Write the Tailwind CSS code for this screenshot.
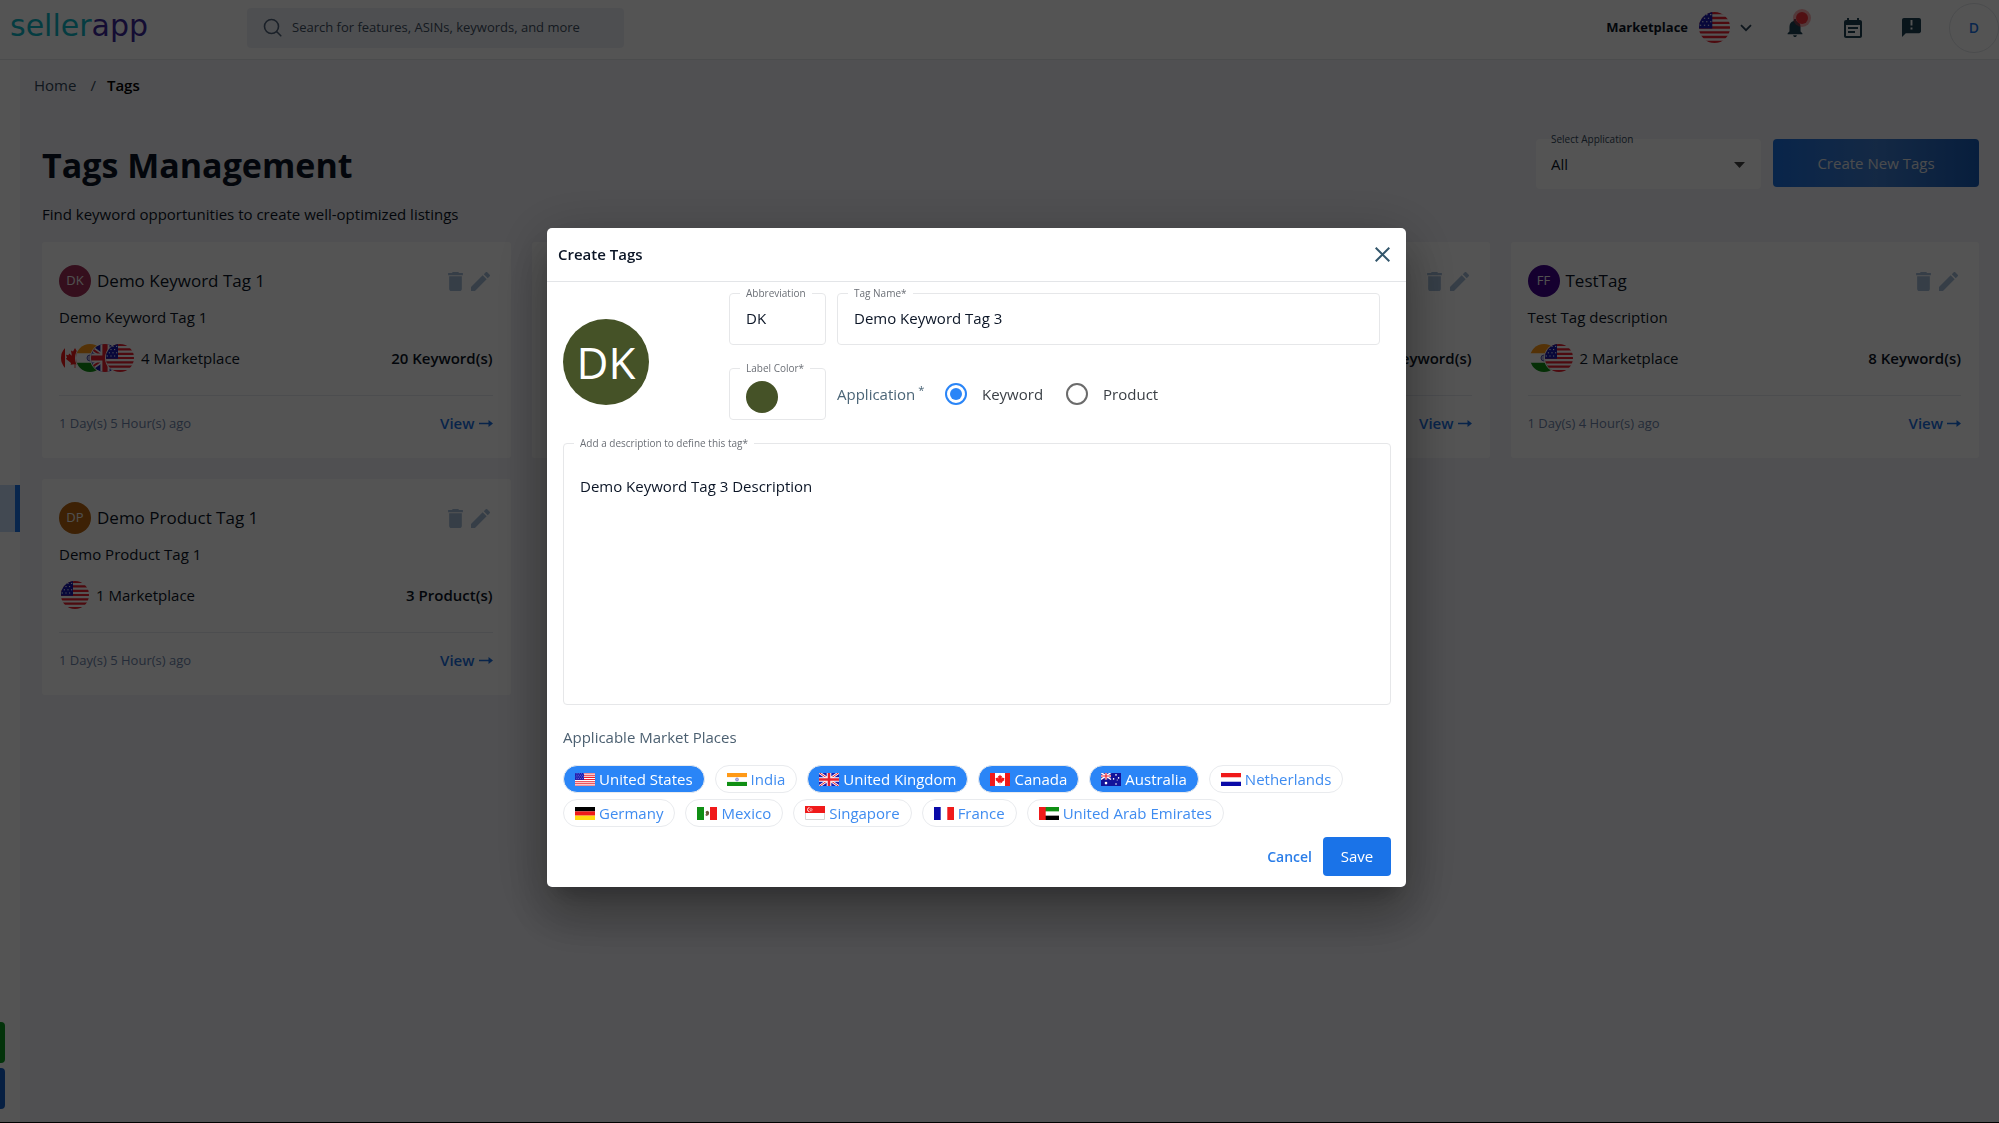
<!DOCTYPE html>
<html lang="en">
<head>
<meta charset="utf-8">
<title>SellerApp - Tags Management</title>
<script src="https://cdn.jsdelivr.net/npm/@tailwindcss/browser@4"></script>
</head>
<body class="min-h-screen bg-[#f2f2f7] font-['Open_Sans',sans-serif] text-[15px] text-[#0b1526]">

<svg class="hidden" aria-hidden="true">
  <symbol id="us" viewBox="0 0 20 14" preserveAspectRatio="xMidYMid slice">
    <path fill="#fff" d="M0 0h20v14H0z"/>
    <path stroke="#e8202e" stroke-width="1.1" d="M0 .5h20M0 2.7h20M0 4.9h20M0 7h20M0 9.2h20M0 11.3h20M0 13.5h20"/>
    <path fill="#1b1bb0" d="M0 0h9v7.4H0z"/>
    <path stroke="#fff" stroke-width=".5" stroke-dasharray=".6 1.2" d="M.8 1.2h8M1.6 2.8h7M.8 4.4h8M1.6 6h7"/>
  </symbol>
  <symbol id="in" viewBox="0 0 20 14" preserveAspectRatio="xMidYMid slice">
    <path fill="#fff" d="M0 0h20v14H0z"/><path fill="#ff9916" d="M0 0h20v4.6H0z"/><path fill="#108f14" d="M0 9.4h20V14H0z"/>
    <circle cx="10" cy="7" r="1.5" fill="#b9b9e0" stroke="#5a5ab8" stroke-width=".5"/>
  </symbol>
  <symbol id="gb" viewBox="0 0 20 14" preserveAspectRatio="xMidYMid slice">
    <path fill="#1b1bb0" d="M0 0h20v14H0z"/>
    <path stroke="#fff" stroke-width="2.6" d="M0 0l20 14M20 0L0 14"/><path stroke="#e8202e" stroke-width="1" d="M0 0l20 14M20 0L0 14"/>
    <path stroke="#fff" stroke-width="4.6" d="M10 0v14M0 7h20"/><path stroke="#e8202e" stroke-width="2.6" d="M10 0v14M0 7h20"/>
  </symbol>
  <symbol id="ca" viewBox="0 0 20 14" preserveAspectRatio="xMidYMid slice">
    <path fill="#fff" d="M0 0h20v14H0z"/><path fill="#f01a1a" d="M0 0h5v14H0zM15 0h5v14h-5z"/>
    <path fill="#f01a1a" d="M10 2l1 1.8 1-.5-.4 2.6 1.300-1.200.4.9 1.200-.2-.5 1.500.6.5-2.600 2.100.2.900-2-.3V12h-.4v-1.900l-2 .3.2-.9-2.600-2.100.6-.5-.5-1.500 1.200.2.4-.9 1.300 1.200L8 3.300l1 .5z"/>
  </symbol>
  <symbol id="au" viewBox="0 0 20 14" preserveAspectRatio="xMidYMid slice">
    <path fill="#12129a" d="M0 0h20v14H0z"/>
    <path stroke="#fff" stroke-width="1.500" d="M0 0l10 7M10 0L0 7"/><path stroke="#fff" stroke-width="2.400" d="M5 0v7M0 3.500h10"/><path stroke="#e8202e" stroke-width="1.200" d="M5 0v7M0 3.500h10"/>
    <g fill="#fff"><circle cx="5" cy="10.600" r="1.300"/><circle cx="15" cy="2.400" r=".8"/><circle cx="15" cy="11.500" r=".8"/><circle cx="12.600" cy="6.400" r=".8"/><circle cx="17.600" cy="5.400" r=".8"/><circle cx="16.200" cy="7.600" r=".5"/></g>
  </symbol>
  <symbol id="nl" viewBox="0 0 20 14" preserveAspectRatio="none"><path fill="#fff" d="M0 0h20v14H0z"/><path fill="#f01a1a" d="M0 0h20v4.600H0z"/><path fill="#0a0aa8" d="M0 9.400h20V14H0z"/></symbol>
  <symbol id="de" viewBox="0 0 20 14" preserveAspectRatio="none"><path d="M0 0h20v4.700H0z"/><path fill="#f01a1a" d="M0 4.700h20v4.600H0z"/><path fill="#ffd90f" d="M0 9.300h20V14H0z"/></symbol>
  <symbol id="mx" viewBox="0 0 20 14" preserveAspectRatio="none"><path fill="#fff" d="M0 0h20v14H0z"/><path fill="#108f14" d="M0 0h7v14H0z"/><path fill="#f01a1a" d="M13 0h7v14h-7z"/><path fill="#6b5a3a" d="M9 4.500l2-.5 1.200 2-.6 2.500L9.500 9.800 8 8.400l1.400-.6L8.600 6z"/></symbol>
  <symbol id="sg" viewBox="0 0 20 14" preserveAspectRatio="none"><path fill="#fff" stroke="#d5d5d5" d="M.5.5h19v13H.5z"/><path fill="#f01a1a" d="M0 0h20v7H0z"/><path fill="none" stroke="#fff" stroke-width=".9" d="M4.500 1.600a2 2 0 1 0 0 4"/><g fill="#fff"><circle cx="6" cy="2.200" r=".5"/><circle cx="5" cy="3.300" r=".5"/><circle cx="7" cy="3.300" r=".5"/><circle cx="5.500" cy="4.700" r=".5"/><circle cx="6.800" cy="4.700" r=".5"/></g></symbol>
  <symbol id="fr" viewBox="0 0 20 14" preserveAspectRatio="none"><path fill="#fff" d="M0 0h20v14H0z"/><path fill="#0a0aa8" d="M0 0h6.700v14H0z"/><path fill="#f01a1a" d="M13.300 0H20v14h-6.700z"/></symbol>
  <symbol id="ae" viewBox="0 0 20 14" preserveAspectRatio="none"><path fill="#fff" d="M0 0h20v14H0z"/><path fill="#108f14" d="M0 0h20v4.700H0z"/><path d="M0 9.300h20V14H0z"/><path fill="#f01a1a" d="M0 0h6.700v14H0z"/></symbol>
  <symbol id="trash" viewBox="5 3 14 18"><path fill="currentColor" d="M6 19c0 1.100.9 2 2 2h8c1.100 0 2-.9 2-2V7H6v12zM19 4h-3.500l-1-1h-5l-1 1H5v2h14V4z"/></symbol>
  <symbol id="pencil" viewBox="3 3 18 18"><path fill="currentColor" d="M3 17.250V21h3.750L17.810 9.940l-3.750-3.750L3 17.250zM20.710 7.040a1 1 0 0 0 0-1.410l-2.340-2.340a1 1 0 0 0-1.410 0l-1.830 1.830 3.750 3.750 1.830-1.830z"/></symbol>
</svg>

<header class="flex h-[60px] items-center border-b border-[#e4e6ea] bg-white pb-1 pl-[10px]">
  <a href="#" class="w-[237px] pb-1 font-['DejaVu_Sans',sans-serif] text-[30px] leading-[40px] text-[#0fb5c4]">seller<span class="text-[#3d2a9c]">app</span></a>
  <label class="flex h-10 w-[377px] items-center gap-[10px] rounded bg-[#edf0f5] pl-4">
    <svg class="size-[19px] text-[#50627a]" viewBox="0 0 19 19" fill="none" stroke="currentColor" stroke-width="1.600" stroke-linecap="round"><circle cx="8.500" cy="8.500" r="7"/><path d="M13.800 13.800l4 4"/></svg>
    <input type="search" aria-label="Search" placeholder="Search for features, ASINs, keywords, and more" class="min-w-0 flex-1 text-[13px] outline-none placeholder:text-[#3f4f63]">
  </label>
  <div class="ml-auto flex items-center">
    <button class="flex items-center text-[13px] font-bold">Marketplace
      <svg class="ml-[11px] size-[31px] rounded-full"><use href="#us"/></svg>
      <svg class="ml-[10px] h-[8px] w-[12px] text-[#2b4558]" viewBox="0 0 12 8" fill="none" stroke="currentColor" stroke-width="1.800"><path d="M1 1.200l5 5 5-5"/></svg>
    </button>
    <button aria-label="Notifications" class="relative ml-[35px]">
      <svg class="h-[18px] w-[16px] text-[#1e4254]" viewBox="4 2.500 16 19.500"><path fill="currentColor" d="M12 22c1.100 0 2-.9 2-2h-4c0 1.100.9 2 2 2zm6-6v-5c0-3.070-1.630-5.640-4.500-6.320V4a1.500 1.500 0 0 0-3 0v.680C7.640 5.360 6 7.920 6 11v5l-2 2v1h16v-1l-2-2z"/></svg>
      <span class="absolute -top-[7px] left-[9px] size-[12px] rounded-full bg-[#f5323c] ring-3 ring-[#f5323c]/40"></span>
    </button>
    <button aria-label="Calendar" class="ml-[41px]">
      <svg class="h-[20px] w-[18px] text-[#1e4254]" viewBox="3 1 18 20"><path fill="currentColor" d="M17 10H7v2h10v-2zm2-7h-1V1h-2v2H8V1H6v2H5a2 2 0 0 0-2 2v14c0 1.100.890 2 2 2h14c1.100 0 2-.9 2-2V5c0-1.100-.9-2-2-2zm0 16H5V8h14v11zm-5-5H7v2h7v-2z"/></svg>
    </button>
    <button aria-label="Feedback" class="ml-[40px]">
      <svg class="size-[19px] text-[#1e4254]" viewBox="2 2 20 20"><path fill="currentColor" d="M20 2H4c-1.100 0-2 .9-2 2v18l4-4h14c1.100 0 2-.9 2-2V4c0-1.100-.9-2-2-2zm-7 12h-2v-2h2v2zm0-4h-2V4h2v6z"/></svg>
    </button>
    <button aria-label="Account" class="ml-[28px] size-[50px] rounded-full border border-[#e2e5ea] text-[14px] font-semibold text-[#1b73e8]">D</button>
  </div>
</header>

<div class="flex min-h-[calc(100vh-60px)]">
  <nav aria-label="Main" class="w-5 shrink-0 bg-white pt-[425px]">
    <a href="#" aria-label="Tags" class="block h-[47px] border-r-5 border-[#1b73e8] bg-[#c8def8]"></a>
    <a href="#" aria-label="Chat" class="mt-[490px] block h-[41px] w-[5px] rounded-r-[4px] bg-[#0a9a20]"></a>
    <a href="#" aria-label="Help" class="mt-[5px] block h-[41px] w-[5px] rounded-r-[4px] bg-[#1560c8]"></a>
  </nav>

  <main class="flex-1 pr-5 pl-[22px]">
    <nav aria-label="Breadcrumb" class="-ml-2 flex items-center pt-[15px] leading-5 text-[#33475b]">
      <a href="#">Home</a><span class="mr-[11px] ml-[14px]">/</span><b class="font-semibold text-black">Tags</b>
    </nav>
    <div class="mt-[44px] flex h-[50px] items-start justify-between">
      <h1 class="pt-[2px] text-[34px] leading-[48px] font-bold">Tags Management</h1>
      <div class="flex items-start gap-3">
        <div class="relative h-[50px] w-[225px] rounded bg-white">
          <label for="app" class="absolute -top-2 left-[15px] text-[10px] leading-4 text-[#33475b]">Select Application</label>
          <select id="app" class="h-full w-full appearance-none px-[15px] text-[15px]"><option>All</option></select>
          <svg class="pointer-events-none absolute top-[23px] right-[16px] h-[6px] w-[11px]" viewBox="0 0 11 6"><path fill="#444" d="M0 0h11L5.500 6z"/></svg>
        </div>
        <button class="h-[48px] w-[206px] rounded bg-linear-to-r from-[#1a70e0] via-[#3d7ccf] to-[#175cb8] text-[15px] text-[#e3e6ea]">Create New Tags</button>
      </div>
    </div>
    <p class="mt-[15px] leading-5">Find keyword opportunities to create well-optimized listings</p>

    <section class="mt-[18px] grid grid-cols-4 gap-[21px]">
      <article class="h-[216px] rounded-[3px] bg-white pt-[23px] pr-[18px] pl-[17px]">
        <div class="flex h-8 items-center">
          <span class="flex size-8 items-center justify-center rounded-full bg-[#a03058] text-[13px] text-[#f3f3f3]">DK</span>
          <h2 class="ml-[6px] text-[17px]">Demo Keyword Tag 1</h2>
          <button aria-label="Delete" class="ml-auto text-[#a3bcd8]"><svg class="h-[19px] w-[15px]"><use href="#trash"/></svg></button>
          <button aria-label="Edit" class="ml-2 mr-[3px] text-[#a3bcd8]"><svg class="size-[19px]"><use href="#pencil"/></svg></button>
        </div>
        <p class="mt-[10px] leading-5">Demo Keyword Tag 1</p>
        <div class="mt-[16px] flex h-[30px] items-center">
          <div class="flex -space-x-[13px] pl-[2px]">
            <svg class="size-7 rounded-full"><use href="#ca"/></svg>
            <svg class="size-7 rounded-full ring-1 ring-white"><use href="#in"/></svg>
            <svg class="size-7 rounded-full ring-1 ring-white"><use href="#gb"/></svg>
            <svg class="size-7 rounded-full ring-1 ring-white"><use href="#us"/></svg>
          </div>
          <span class="ml-[7px]">4 Marketplace</span>
          <b class="ml-auto font-semibold">20 Keyword(s)</b>
        </div>
        <div class="mt-[22px] flex items-center justify-between border-t border-[#e6e9f0] pt-[17px] leading-5">
          <span class="text-[13px] text-[#6d84aa]">1 Day(s) 5 Hour(s) ago</span>
          <a href="#" class="flex items-center gap-1 font-semibold text-[#1b6fe0]">View<svg class="h-[9px] w-[14px]" viewBox="0 0 14 9"><path fill="currentColor" d="M0 3.700h9.500V1L14 4.500 9.500 8V5.300H0z"/></svg></a>
        </div>
      </article>

      <article class="h-[216px] rounded-[3px] bg-white"></article>

      <article class="h-[216px] rounded-[3px] bg-white pt-[23px] pr-[18px] pl-[17px]">
        <div class="flex h-8 items-center">
          <button aria-label="Delete" class="ml-auto text-[#a3bcd8]"><svg class="h-[19px] w-[15px]"><use href="#trash"/></svg></button>
          <button aria-label="Edit" class="ml-2 mr-[3px] text-[#a3bcd8]"><svg class="size-[19px]"><use href="#pencil"/></svg></button>
        </div>
        <div class="mt-[46px] flex h-[30px] items-center">
          <b class="ml-auto font-semibold">Keyword(s)</b>
        </div>
        <div class="mt-[22px] flex items-center justify-end border-t border-[#e6e9f0] pt-[17px] leading-5">
          <a href="#" class="flex items-center gap-1 font-semibold text-[#1b6fe0]">View<svg class="h-[9px] w-[14px]" viewBox="0 0 14 9"><path fill="currentColor" d="M0 3.700h9.500V1L14 4.500 9.500 8V5.300H0z"/></svg></a>
        </div>
      </article>

      <article class="h-[216px] rounded-[3px] bg-white pt-[23px] pr-[18px] pl-[17px]">
        <div class="flex h-8 items-center">
          <span class="flex size-8 items-center justify-center rounded-full bg-[#42008f] text-[13px] text-[#f3f3f3]">FF</span>
          <h2 class="ml-[6px] text-[17px]">TestTag</h2>
          <button aria-label="Delete" class="ml-auto text-[#a3bcd8]"><svg class="h-[19px] w-[15px]"><use href="#trash"/></svg></button>
          <button aria-label="Edit" class="ml-2 mr-[3px] text-[#a3bcd8]"><svg class="size-[19px]"><use href="#pencil"/></svg></button>
        </div>
        <p class="mt-[10px] leading-5">Test Tag description</p>
        <div class="mt-[16px] flex h-[30px] items-center">
          <div class="flex -space-x-[13px] pl-[2px]">
            <svg class="size-7 rounded-full"><use href="#in"/></svg>
            <svg class="size-7 rounded-full ring-1 ring-white"><use href="#us"/></svg>
          </div>
          <span class="ml-[7px]">2 Marketplace</span>
          <b class="ml-auto font-semibold">8 Keyword(s)</b>
        </div>
        <div class="mt-[22px] flex items-center justify-between border-t border-[#e6e9f0] pt-[17px] leading-5">
          <span class="text-[13px] text-[#6d84aa]">1 Day(s) 4 Hour(s) ago</span>
          <a href="#" class="flex items-center gap-1 font-semibold text-[#1b6fe0]">View<svg class="h-[9px] w-[14px]" viewBox="0 0 14 9"><path fill="currentColor" d="M0 3.700h9.500V1L14 4.500 9.500 8V5.300H0z"/></svg></a>
        </div>
      </article>

      <article class="h-[216px] rounded-[3px] bg-white pt-[23px] pr-[18px] pl-[17px]">
        <div class="flex h-8 items-center">
          <span class="flex size-8 items-center justify-center rounded-full bg-[#b86510] text-[13px] text-[#f3f3f3]">DP</span>
          <h2 class="ml-[6px] text-[17px]">Demo Product Tag 1</h2>
          <button aria-label="Delete" class="ml-auto text-[#a3bcd8]"><svg class="h-[19px] w-[15px]"><use href="#trash"/></svg></button>
          <button aria-label="Edit" class="ml-2 mr-[3px] text-[#a3bcd8]"><svg class="size-[19px]"><use href="#pencil"/></svg></button>
        </div>
        <p class="mt-[10px] leading-5">Demo Product Tag 1</p>
        <div class="mt-[16px] flex h-[30px] items-center">
          <div class="flex pl-[2px]">
            <svg class="size-7 rounded-full"><use href="#us"/></svg>
          </div>
          <span class="ml-[7px]">1 Marketplace</span>
          <b class="ml-auto font-semibold">3 Product(s)</b>
        </div>
        <div class="mt-[22px] flex items-center justify-between border-t border-[#e6e9f0] pt-[17px] leading-5">
          <span class="text-[13px] text-[#6d84aa]">1 Day(s) 5 Hour(s) ago</span>
          <a href="#" class="flex items-center gap-1 font-semibold text-[#1b6fe0]">View<svg class="h-[9px] w-[14px]" viewBox="0 0 14 9"><path fill="currentColor" d="M0 3.700h9.500V1L14 4.500 9.500 8V5.300H0z"/></svg></a>
        </div>
      </article>
    </section>
  </main>
</div>

<div class="fixed inset-0 flex items-center justify-center border-b border-black bg-black/67 pr-[46px] pb-[7px]">
  <form role="dialog" aria-modal="true" aria-labelledby="dlg" class="w-[859px] rounded-[5px] bg-white shadow-[0_14px_19px_-9px_rgba(0,0,0,0.2),0_30px_48px_4px_rgba(0,0,0,0.2),0_11px_58px_10px_rgba(0,0,0,0.18)]">
    <div class="flex h-[54px] items-center justify-between border-b border-[#e3e5e8] pr-4 pl-[11px]">
      <h2 id="dlg" class="font-semibold">Create Tags</h2>
      <button type="button" aria-label="Close" class="text-[#33566b]"><svg class="size-[15px]" viewBox="0 0 15 15" fill="none" stroke="currentColor" stroke-width="2"><path d="M.7.7l13.600 13.600M14.300.7L.7 14.300"/></svg></button>
    </div>
    <div class="pr-[15px] pb-[11px] pl-4">
      <div class="flex items-center pt-[3px]">
        <span class="mt-[18px] flex size-[86px] items-center justify-center rounded-full bg-[#455227] text-[44px] text-white">DK</span>
        <div class="ml-[80px] flex-1 pr-[11px]">
          <div class="flex gap-[11px]">
            <fieldset class="h-[60px] w-[97px] min-w-0 shrink-0 rounded border border-[#e6e7e9] px-[10px]">
              <legend class="px-[6px] text-[10px] leading-4 text-[#6b6f76]"><label for="abbr">Abbreviation</label></legend>
              <input id="abbr" value="DK" class="block h-[34px] w-full px-[6px] outline-none">
            </fieldset>
            <fieldset class="h-[60px] min-w-0 flex-1 rounded border border-[#e6e7e9] px-[10px]">
              <legend class="px-[6px] text-[10px] leading-4 text-[#6b6f76]"><label for="name">Tag Name*</label></legend>
              <input id="name" value="Demo Keyword Tag 3" class="block h-[34px] w-full px-[6px] outline-none">
            </fieldset>
          </div>
          <div class="mt-[15px] flex items-center gap-[11px]">
            <fieldset class="h-[60px] w-[97px] min-w-0 shrink-0 rounded border border-[#e6e7e9] px-[10px]">
              <legend class="px-[6px] text-[10px] leading-4 whitespace-nowrap text-[#6b6f76]">Label Color*</legend>
              <button type="button" aria-label="Label color" class="ml-[6px] mt-[5px] block size-8 rounded-full bg-[#455227]"></button>
            </fieldset>
            <div class="flex items-center pt-[8px] text-[#3a3f45]">
              <span class="w-[108px] text-[#4b6577]">Application<sup class="ml-[3px]">*</sup></span>
              <input id="kw" type="radio" name="app" checked class="size-[22px] appearance-none rounded-full border-2 border-[#2a85f7] bg-[#2a85f7] bg-clip-content p-[3px]">
              <label for="kw" class="ml-[15px]">Keyword</label>
              <input id="pr" type="radio" name="app" class="ml-[23px] size-[22px] appearance-none rounded-full border-2 border-[#6b6b6b]">
              <label for="pr" class="ml-[15px]">Product</label>
            </div>
          </div>
        </div>
      </div>
      <fieldset class="mt-[15px] h-[270px] rounded border border-[#e6e7e9] px-[10px]">
        <legend class="px-[6px] text-[10px] leading-4 text-[#6b6f76]"><label for="desc">Add a description to define this tag*</label></legend>
        <textarea id="desc" class="block h-[240px] w-full resize-none px-[6px] pt-[25px] leading-5 outline-none">Demo Keyword Tag 3 Description</textarea>
      </fieldset>
      <p class="mt-[22px] leading-5 text-[#4b5f70]">Applicable Market Places</p>
      <div class="mt-[18px] flex flex-wrap gap-x-[10px] gap-y-[6px]">
        <button type="button" class="flex h-7 items-center gap-1 rounded-full border border-[#e9ebee] bg-[#2a85f7] px-[11px] text-white"><svg class="h-[13px] w-5"><use href="#us"/></svg>United States</button>
        <button type="button" class="flex h-7 items-center gap-1 rounded-full border border-[#e9ebee] px-[11px] text-[#3f8cf0]"><svg class="h-[13px] w-5"><use href="#in"/></svg>India</button>
        <button type="button" class="flex h-7 items-center gap-1 rounded-full border border-[#e9ebee] bg-[#2a85f7] px-[11px] text-white"><svg class="h-[13px] w-5"><use href="#gb"/></svg>United Kingdom</button>
        <button type="button" class="flex h-7 items-center gap-1 rounded-full border border-[#e9ebee] bg-[#2a85f7] px-[11px] text-white"><svg class="h-[13px] w-5"><use href="#ca"/></svg>Canada</button>
        <button type="button" class="flex h-7 items-center gap-1 rounded-full border border-[#e9ebee] bg-[#2a85f7] px-[11px] text-white"><svg class="h-[13px] w-5"><use href="#au"/></svg>Australia</button>
        <button type="button" class="flex h-7 items-center gap-1 rounded-full border border-[#e9ebee] px-[11px] text-[#3f8cf0]"><svg class="h-[13px] w-5"><use href="#nl"/></svg>Netherlands</button>
        <button type="button" class="flex h-7 items-center gap-1 rounded-full border border-[#e9ebee] px-[11px] text-[#3f8cf0]"><svg class="h-[13px] w-5"><use href="#de"/></svg>Germany</button>
        <button type="button" class="flex h-7 items-center gap-1 rounded-full border border-[#e9ebee] px-[11px] text-[#3f8cf0]"><svg class="h-[13px] w-5"><use href="#mx"/></svg>Mexico</button>
        <button type="button" class="flex h-7 items-center gap-1 rounded-full border border-[#e9ebee] px-[11px] text-[#3f8cf0]"><svg class="h-[14px] w-5"><use href="#sg"/></svg>Singapore</button>
        <button type="button" class="flex h-7 items-center gap-1 rounded-full border border-[#e9ebee] px-[11px] text-[#3f8cf0]"><svg class="h-[13px] w-5"><use href="#fr"/></svg>France</button>
        <button type="button" class="flex h-7 items-center gap-1 rounded-full border border-[#e9ebee] px-[11px] text-[#3f8cf0]"><svg class="h-[13px] w-5"><use href="#ae"/></svg>United Arab Emirates</button>
      </div>
      <div class="mt-[10px] flex items-center justify-end gap-[11px]">
        <button type="button" class="text-[14px] font-semibold text-[#2a7de8]">Cancel</button>
        <button type="submit" class="h-[39px] w-[68px] rounded bg-[#1a73e8] text-white">Save</button>
      </div>
    </div>
  </form>
</div>
</body>
</html>
